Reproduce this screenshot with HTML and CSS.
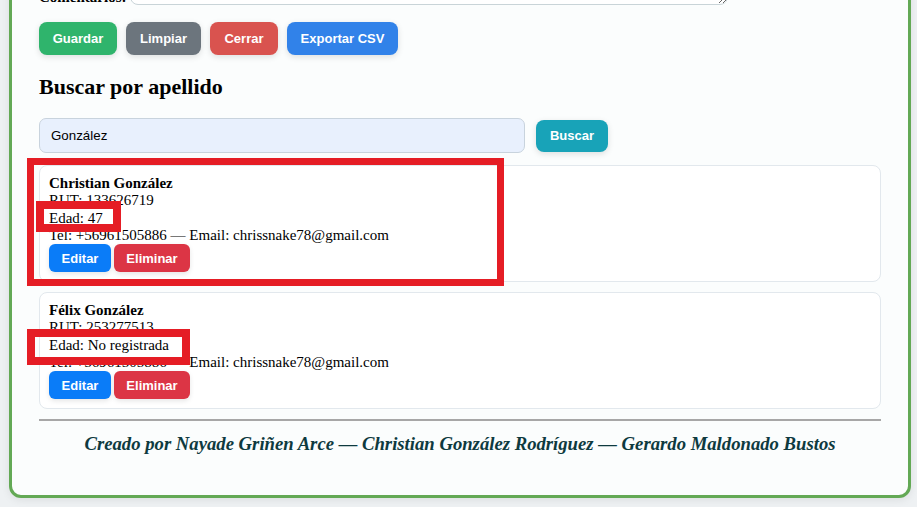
FILE: index.html
```html
<!DOCTYPE html>
<html lang="es">
<head>
<meta charset="utf-8">
<title>Registro</title>
<link rel="stylesheet" href="styles.css">
</head>
<body>
<div class="container">
  <div class="form-row">
    <label class="lbl" for="coment">Comentarios:</label>
    <textarea id="coment" class="textarea"></textarea>
  </div>
  <div class="actions">
    <button class="btn btn-green">Guardar</button>
    <button class="btn btn-gray">Limpiar</button>
    <button class="btn btn-red">Cerrar</button>
    <button class="btn btn-blue">Exportar CSV</button>
  </div>
  <h2 class="title">Buscar por apellido</h2>
  <div class="search">
    <input class="search-input" type="text" value="González">
    <button class="btn btn-teal">Buscar</button>
  </div>
  <div class="results">
    <div class="card">
      <div class="line name">Christian González</div>
      <div class="line">RUT: 133626719</div>
      <div class="line">Edad: 47</div>
      <div class="line">Tel: +56961505886 — Email: chrissnake78@gmail.com</div>
      <div class="card-actions">
        <button class="sbtn sbtn-blue">Editar</button>
        <button class="sbtn sbtn-red">Eliminar</button>
      </div>
    </div>
    <div class="card">
      <div class="line name">Félix González</div>
      <div class="line">RUT: 253277513</div>
      <div class="line">Edad: No registrada</div>
      <div class="line">Tel: +56961505886 — Email: chrissnake78@gmail.com</div>
      <div class="card-actions">
        <button class="sbtn sbtn-blue">Editar</button>
        <button class="sbtn sbtn-red">Eliminar</button>
      </div>
    </div>
  </div>
  <div class="divider"></div>
  <p class="footer">Creado por Nayade Griñen Arce — Christian González Rodríguez — Gerardo Maldonado Bustos</p>
</div>
<div class="mark mark-card"></div>
<div class="mark mark-age1"></div>
<div class="mark mark-age2"></div>
</body>
</html>
```
FILE: styles.css
```css
html, body {
  margin: 0;
  padding: 0;
  overflow: hidden;
}
body {
  background: #eef1f3;
  font-family: "Liberation Serif", "Times New Roman", serif;
  color: #000;
  position: relative;
  height: 507px;
}
.container {
  margin: -78px 6px 9px 9px;
  border: 3px solid #63a955;
  border-radius: 12px;
  background: #fbfdfd;
  padding: 20px 27px 40px 27px;
  box-shadow: 0 2px 8px rgba(0, 0, 0, 0.08);
}
.form-row {
  display: flex;
  align-items: flex-end;
  gap: 4px;
}
.lbl {
  font-weight: bold;
  font-size: 15px;
  line-height: 15px;
}
.textarea {
  box-sizing: border-box;
  width: 598px;
  height: 60px;
  border: 1px solid #c9d4d8;
  border-radius: 8px;
  background: #fff;
  margin: 0;
}
.actions {
  display: flex;
  gap: 9px;
  margin-top: 17px;
}
.btn {
  height: 33px;
  padding: 0;
  border: 0;
  border-radius: 8px;
  font-family: "Liberation Sans", Arial, sans-serif;
  font-weight: bold;
  font-size: 13px;
  white-space: nowrap;
  color: #fff;
  box-shadow: 0 2px 6px rgba(0, 0, 0, 0.12);
}
.btn-green { background: #2fb46c; width: 78px; }
.btn-gray { background: #6c757d; width: 75px; }
.btn-red { background: #d9534f; width: 68px; }
.btn-blue { background: #3182e9; width: 111px; }
.btn-teal { background: #18a3b8; width: 72px; height: 32px; }
.title {
  font-size: 22px;
  line-height: 25px;
  font-weight: bold;
  margin: 19px 0;
}
.search {
  display: flex;
  align-items: center;
  gap: 11px;
  margin-bottom: 12px;
}
.search-input {
  box-sizing: border-box;
  width: 486px;
  height: 35px;
  padding: 0 11px;
  border: 1px solid #c8d3dd;
  border-radius: 7px;
  background: #e8f0fd;
  font-family: "Liberation Sans", Arial, sans-serif;
  font-size: 13.33px;
  color: #000;
  margin: 0;
}
.card {
  background: #fff;
  border: 1px solid #e2e8ed;
  border-radius: 8px;
  padding: 9px;
  margin-bottom: 10px;
}
.line {
  font-size: 15px;
  line-height: 17.25px;
}
.name {
  font-weight: bold;
}
.card-actions {
  display: flex;
  gap: 3px;
}
.sbtn {
  height: 28px;
  border: 0;
  border-radius: 6px;
  font-family: "Liberation Sans", Arial, sans-serif;
  font-weight: bold;
  font-size: 13px;
  white-space: nowrap;
  color: #fff;
  padding: 0;
  box-shadow: 0 2px 5px rgba(0, 0, 0, 0.1);
}
.sbtn-blue { background: #0a7cf8; width: 62px; }
.sbtn-red { background: #dc3545; width: 76px; }
.divider {
  height: 2px;
  background: #a7a7a7;
}
.footer {
  margin: 12px 0 0;
  text-align: center;
  font-style: italic;
  font-weight: bold;
  font-size: 18.7px;
  color: #0e3a3f;
}
.mark {
  position: absolute;
  border-style: solid;
  border-color: #e51d25;
  box-sizing: border-box;
}
.mark-card {
  left: 27px;
  top: 158px;
  width: 477px;
  height: 128px;
  border-width: 7px;
}
.mark-age1 {
  left: 36px;
  top: 201px;
  width: 85px;
  height: 31px;
  border-width: 8px;
}
.mark-age2 {
  left: 27px;
  top: 329px;
  width: 163px;
  height: 36px;
  border-width: 8px;
}
```
